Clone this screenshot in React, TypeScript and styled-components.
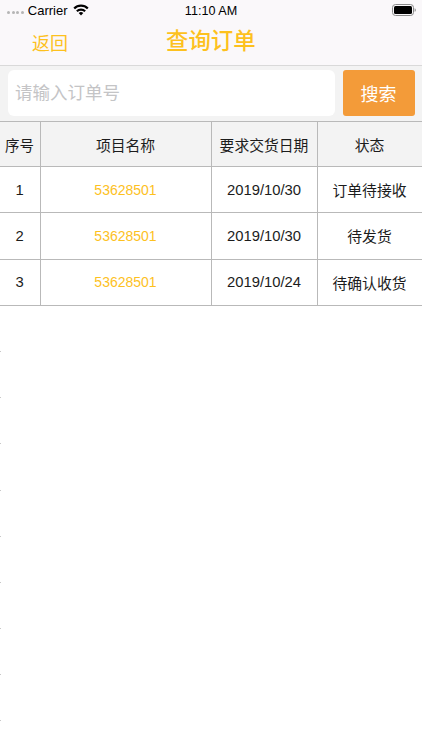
import { createGlobalStyle } from 'styled-components';
import styled from 'styled-components';

const YELLOW = '#fdc11e';
const LINE = '#b9b9b9';
const FONT = `"Liberation Sans", "Noto Sans CJK SC", sans-serif`;

const COLUMNS = '40px 171px 106px 105px';
const ROW_HEIGHT = '46.2px';

const ORDERS = [
  { id: 1, code: '53628501', date: '2019/10/30', status: '订单待接收' },
  { id: 2, code: '53628501', date: '2019/10/30', status: '待发货' },
  { id: 3, code: '53628501', date: '2019/10/24', status: '待确认收货' },
];

const EMPTY_ROWS = [0, 1, 2, 3, 4, 5, 6, 7, 8];

const GlobalStyle = createGlobalStyle`
  html, body {
    margin: 0;
    padding: 0;
    background: #fff;
  }
  body {
    font-family: ${FONT};
    color: #1c1c1c;
  }
`;

const WifiIcon = () => (
  <svg width='16' height='12' viewBox='0 0 16 12'>
    <path d='M8 11.6 5.7 9.1a3.3 3.3 0 0 1 4.6 0z' fill='#000' />
    <path d='M4.6 8 3.1 6.4a7 7 0 0 1 9.8 0L11.4 8a4.9 4.9 0 0 0-6.8 0z' fill='#000' />
    <path d='M2 5.3.4 3.7a10.8 10.8 0 0 1 15.2 0L14 5.3a8.5 8.5 0 0 0-12 0z' fill='#000' />
  </svg>
);

const BatteryIcon = () => (
  <svg width='24' height='12' viewBox='0 0 24 12'>
    <rect x='0.5' y='0.5' width='21' height='11' rx='3' fill='none' stroke='#8a8a8a' />
    <rect x='2' y='2' width='18' height='8' rx='1.5' fill='#000' />
    <path d='M22.6 4.2c.8.2 1.2.9 1.2 1.8s-.4 1.6-1.2 1.8z' fill='#8a8a8a' />
  </svg>
);

const SignalDots = () => (
  <StyledDots>
    <StyledDot />
    <StyledDot />
    <StyledDot />
    <StyledDot />
  </StyledDots>
);

export default function App() {
  return (
    <>
      <GlobalStyle />
      <StyledPage>
        <StyledHeader>
          <StyledStatusBar>
            <StyledCarrier>
              <SignalDots />
              <span>Carrier</span>
              <WifiIcon />
            </StyledCarrier>
            <StyledTime>11:10 AM</StyledTime>
            <StyledBattery>
              <BatteryIcon />
            </StyledBattery>
          </StyledStatusBar>
          <StyledNav>
            <StyledBack>返回</StyledBack>
            <StyledTitle>查询订单</StyledTitle>
          </StyledNav>
        </StyledHeader>
        <StyledSearch>
          <StyledInput type='text' placeholder='请输入订单号' />
          <StyledButton>搜索</StyledButton>
        </StyledSearch>
        <StyledRow $head>
          <StyledCell $small>序号</StyledCell>
          <StyledCell>项目名称</StyledCell>
          <StyledCell>要求交货日期</StyledCell>
          <StyledCell>状态</StyledCell>
        </StyledRow>
        {ORDERS.map(order => (
          <StyledRow key={order.id}>
            <StyledCell>{order.id}</StyledCell>
            <StyledCell $link>{order.code}</StyledCell>
            <StyledCell>{order.date}</StyledCell>
            <StyledCell>{order.status}</StyledCell>
          </StyledRow>
        ))}
        {EMPTY_ROWS.map(i => (
          <StyledEmptyRow key={i}>
            <StyledTick />
          </StyledEmptyRow>
        ))}
      </StyledPage>
    </>
  );
}

const StyledPage = styled.div`
  width: 422px;
  height: 750px;
  overflow: hidden;
  background: #fff;
`;

const StyledHeader = styled.header`
  height: 65px;
  background: #faf8fa;
  border-bottom: 1px solid #d9d9d9;
`;

const StyledStatusBar = styled.div`
  height: 20px;
  display: grid;
  grid-template-columns: 1fr auto 1fr;
  align-items: center;
  font-size: 13px;
  color: #000;
`;

const StyledCarrier = styled.div`
  display: flex;
  align-items: center;
  padding-left: 7px;
  gap: 5px;
`;

const StyledDots = styled.div`
  display: flex;
  gap: 1.6px;
  margin-top: 5px;
  margin-right: -1px;
`;

const StyledDot = styled.i`
  width: 3px;
  height: 3px;
  border-radius: 50%;
  background: #b5b5b5;
`;

const StyledTime = styled.div`
  font-size: 12.6px;
  padding-top: 1px;
`;

const StyledBattery = styled.div`
  display: flex;
  justify-content: flex-end;
  padding-right: 6px;
`;

const StyledNav = styled.div`
  height: 45px;
  box-sizing: border-box;
  padding: 0 0 2px 32px;
  display: flex;
  align-items: center;
  color: ${YELLOW};
`;

const StyledBack = styled.div`
  width: 134px;
  font-size: 18px;
`;

const StyledTitle = styled.div`
  font-size: 22.4px;
  font-weight: 500;
  margin-bottom: 6px;
`;

const StyledSearch = styled.div`
  height: 55px;
  box-sizing: border-box;
  padding: 4px 7px 5px 8px;
  display: flex;
  gap: 8px;
  background: #f3f3f3;
`;

const StyledInput = styled.input`
  flex: 1;
  min-width: 0;
  box-sizing: border-box;
  border: none;
  border-radius: 6px;
  outline: none;
  background: #fff;
  padding: 0 7px;
  font-family: ${FONT};
  font-size: 17.5px;

  &::placeholder {
    color: #c4c4c6;
  }
`;

const StyledButton = styled.button`
  width: 72px;
  border: none;
  border-radius: 3px;
  background: #f39b39;
  color: #fff;
  font-family: ${FONT};
  font-size: 18px;
  padding: 0 1px 0 0;
`;

const StyledRow = styled.div<{ $head?: boolean }>`
  height: ${ROW_HEIGHT};
  box-sizing: border-box;
  display: grid;
  grid-template-columns: ${COLUMNS};
  border-bottom: 1px solid ${LINE};
  border-top: ${props => (props.$head ? `1px solid ${LINE}` : 'none')};
  background: ${props => (props.$head ? '#f3f3f3' : '#fff')};
`;

const StyledCell = styled.div<{ $link?: boolean; $small?: boolean }>`
  display: flex;
  align-items: center;
  justify-content: center;
  box-sizing: border-box;
  padding-right: 1px;
  font-size: ${props => (props.$link ? '14px' : props.$small ? '14.5px' : '14.8px')};
  color: ${props => (props.$link ? YELLOW : '#1c1c1c')};
  white-space: nowrap;

  & + & {
    border-left: 1px solid ${LINE};
  }
`;

const StyledEmptyRow = styled.div`
  height: ${ROW_HEIGHT};
  display: flex;
  align-items: flex-end;
`;

const StyledTick = styled.i`
  width: 1px;
  height: 1px;
  background: #c8c8c8;
`;
